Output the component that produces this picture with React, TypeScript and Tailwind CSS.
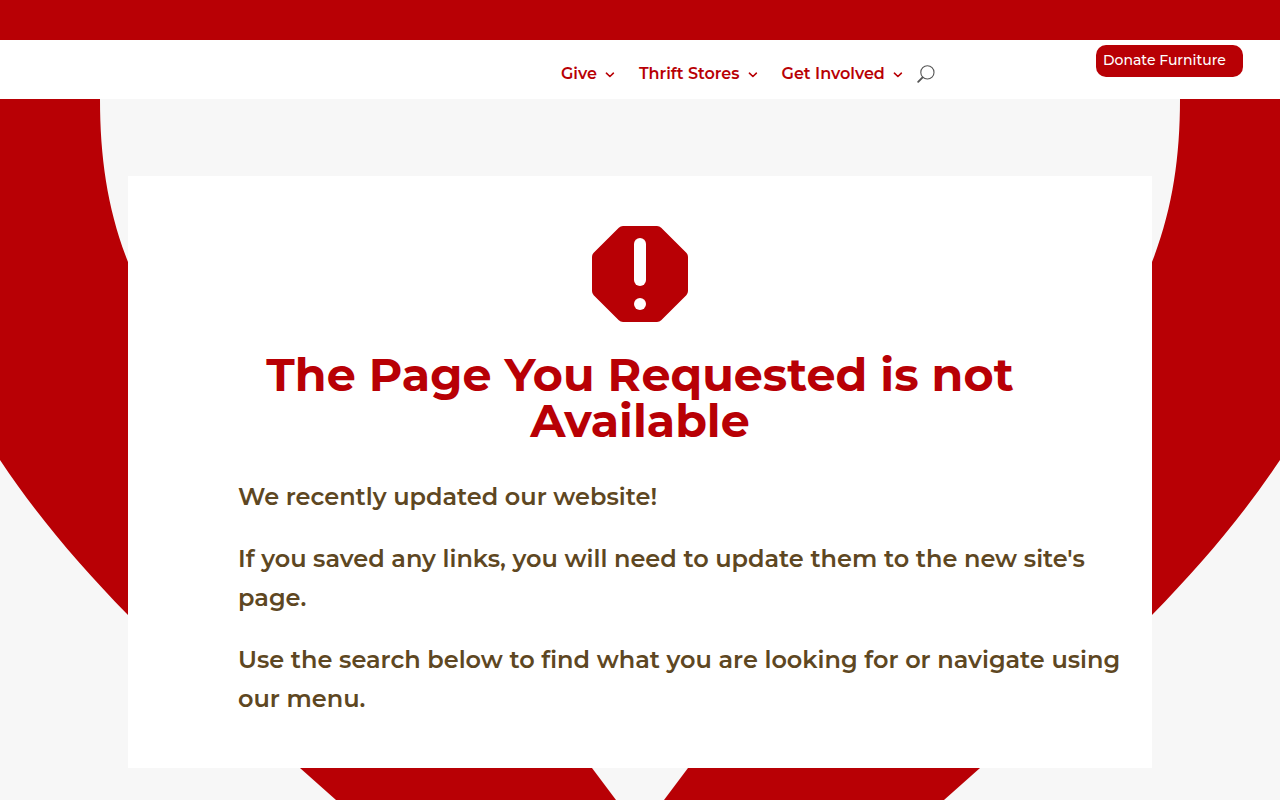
const NAV_ITEMS = [
    { label: "Give", href: "#give" },
    { label: "Thrift Stores", href: "#thrift-stores" },
    { label: "Get Involved", href: "#get-involved" },
];

function ChevronIcon() {
    return (
        <svg className="w-[10px] h-[6px] mt-0.5" viewBox="0 0 10 6" fill="none" aria-hidden="true">
            <path d="M1.4 1.2 4.900 4.5 8.400 1.2" stroke="currentColor" strokeWidth="1.6" strokeLinecap="round" strokeLinejoin="round" />
        </svg>
    );
}

function SearchIcon() {
    return (
        <svg className="w-[18px] h-[18px]" viewBox="0 0 18 18" fill="none" stroke="currentColor" aria-hidden="true">
            <circle cx="10.4" cy="7.4" r="6.6" strokeWidth="1.1" />
            <path d="M5.6 12.4 1.2 16.8" strokeWidth="1.9" strokeLinecap="round" />
        </svg>
    );
}

function ErrorIcon() {
    return (
        <svg className="w-24 h-24" viewBox="0 0 96 96" aria-hidden="true">
            <path
                d="M31 0h34q2.5 0 4.2 1.7L94.3 26.8Q96 28.5 96 31v34q0 2.5-1.7 4.2L69.2 94.3Q67.5 96 65 96H31q-2.5 0-4.2-1.7L1.7 69.2Q0 67.5 0 65V31q0-2.5 1.7-4.2L26.8 1.7Q28.5 0 31 0Z"
                fill="#b80005"
            />
            <rect x="42" y="12" width="12" height="48" rx="6" fill="#fff" />
            <circle cx="48" cy="78" r="6" fill="#fff" />
        </svg>
    );
}

// Big heart outline behind the card
function HeartBackground() {
    return (
        <svg
            className="[grid-area:1/1] w-full h-full"
            viewBox="0 0 1280 701"
            preserveAspectRatio="xMidYMin slice"
            fill="#b80005"
            aria-hidden="true"
        >
            <path d="M0 0H100C100 60 108 112 128 163C220 390 440 480 592 669L616 701H336L300 669C240 618 184 572 128 516C78 465 36 415 0 361Z" />
            <path d="M1280 0H1180C1180 60 1172 112 1152 163C1060 390 840 480 688 669L664 701H944L980 669C1040 618 1096 572 1152 516C1202 465 1244 415 1280 361Z" />
        </svg>
    );
}

export default function App() {
    return (
        <div className="min-h-screen bg-[#f7f7f7] font-[Montserrat,Inter,sans-serif]">
            <div className="h-10 bg-[#b80005]" />

            <header className="flex items-start justify-between h-[59px] bg-white pl-[calc(50%-79px)] pr-[37px]">
                <nav className="flex items-center h-[67px] text-[#b80005]">
                    <ul className="flex gap-6">
                        {NAV_ITEMS.map((item) => (
                            <li key={item.label}>
                                <a href={item.href} className="flex items-center gap-2 text-base font-semibold whitespace-nowrap">
                                    {item.label}
                                    <ChevronIcon />
                                </a>
                            </li>
                        ))}
                    </ul>
                    <button type="button" aria-label="Search" className="ml-3.5 text-[#555]">
                        <SearchIcon />
                    </button>
                </nav>

                <a
                    href="#donate"
                    className="flex w-[147px] h-8 mt-[5px] pl-[7px] rounded-[10px] bg-[#b80005] text-white text-sm leading-[30px] font-medium whitespace-nowrap"
                >
                    Donate Furniture
                </a>
            </header>

            <main className="grid overflow-hidden">
                <HeartBackground />

                <section className="[grid-area:1/1] self-start w-4/5 mx-auto mt-[77px] mb-8 bg-white py-[50px]">
                    <div className="flex justify-center">
                        <ErrorIcon />
                    </div>
                    <h1 className="w-4/5 mx-auto mt-[30px] text-center text-[46px] leading-[46px] font-bold text-[#b80005]">
                        The Page You Requested is not Available
                    </h1>
                    <div className="mt-[33px] pl-[110px] pr-5 space-y-[23px] text-2xl leading-[39px] font-semibold text-[#5e4722]">
                        <p>We recently updated our website!</p>
                        <p>If you saved any links, you will need to update them to the new site's page.</p>
                        <p>Use the search below to find what you are looking for or navigate using our menu.</p>
                    </div>
                </section>
            </main>
        </div>
    );
}
